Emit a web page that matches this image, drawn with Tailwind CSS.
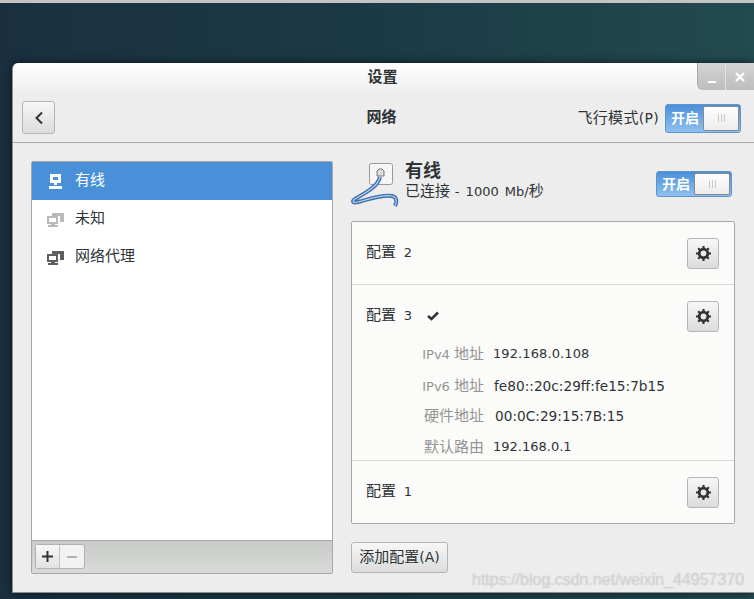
<!DOCTYPE html>
<html lang="zh-CN">
<head>
  <meta charset="UTF-8" />
  <title>设置</title>
  <script src="https://cdn.jsdelivr.net/npm/@tailwindcss/browser@4"></script>
</head>
<body class="overflow-hidden">
  <div class="relative w-[754px] h-[599px] overflow-hidden bg-gradient-to-r from-[#1a3040] via-[#1b3a45] to-[#234a50] font-['DejaVu_Sans','Noto_Sans_CJK_SC',sans-serif] text-[15px] text-[#2e3436]">
    <div class="h-[3px] bg-[#c4c4c4]"></div>

    <!-- window -->
    <div class="relative ml-[12px] mt-[60px] h-[530px] rounded-t-[6px] bg-[#ededed] border-l border-b border-[#8e8e8e] shadow-[0_0_10px_rgba(0,0,0,0.6)]">
      <div class="h-[31px] rounded-t-[6px] bg-gradient-to-b from-white to-[#ededed] flex items-center justify-center pr-[2px]">
        <span class="font-bold text-[15px] leading-none mt-[-3px]">设置</span>
      </div>

      <!-- window buttons -->
      <div class="absolute right-0 top-0 w-[57px] h-[27px] flex rounded-bl-[6px] bg-gradient-to-b from-[#d4d4d4] to-[#bdbdbd] border-l border-[#a8a8a8]">
        <div class="w-[28px] border-r border-[#e2e2e2] flex items-end justify-center pb-[7px]">
          <div class="w-[8px] h-[2px] bg-white"></div>
        </div>
        <div class="flex-1 flex items-center justify-center">
          <svg width="12" height="12" viewBox="0 0 12 12"><path d="M2 2l8 8M10 2l-8 8" stroke="#fff" stroke-width="2.4" /></svg>
        </div>
      </div>

      <!-- header bar -->
      <div class="h-[49px] grid grid-cols-[1fr_auto_1fr] items-center pl-[9px] pr-[13px] border-b border-[#a8a8a8]">
        <button class="w-[33px] h-[33px] mt-[-1px] rounded-[3px] border border-[#b5b5b5] bg-gradient-to-b from-[#f7f7f7] to-[#dcdcdc] flex items-center justify-center">
          <svg width="12" height="14" viewBox="0 0 12 14"><path d="M9 1.500L3.500 7 9 12.500" fill="none" stroke="#2e3436" stroke-width="2" /></svg>
        </button>
        <div class="font-bold text-[15px] mt-[-1px]">网络</div>
        <div class="flex items-center justify-end">
          <span class="mr-[6px] text-[15px] whitespace-nowrap tracking-[0.3px]">飞行模式<span class="text-[14px]">(P)</span></span>
          <div class="w-[76px] h-[29px] shrink-0 rounded-[3px] border border-[#5e93ce] bg-gradient-to-b from-[#4a90d9] to-[#8fc0f0] flex items-center p-[1px]">
            <span class="w-[36px] text-center text-white font-bold text-[14px]">开启</span>
            <div class="flex-1 h-full rounded-[2px] border border-[#8a8a8a] bg-gradient-to-b from-white to-[#ececec] flex items-center justify-center gap-[2px]">
              <i class="w-[1px] h-[8px] bg-[#c8c8c8]"></i><i class="w-[1px] h-[8px] bg-[#c8c8c8]"></i><i class="w-[1px] h-[8px] bg-[#c8c8c8]"></i>
            </div>
          </div>
        </div>
      </div>

      <div class="flex pl-[18px] pt-[18px] gap-[18px]">
        <!-- left list -->
        <div class="w-[302px] h-[413px] flex flex-col rounded-[2px] border border-[#a8a8a8]">
          <div class="flex-1 bg-white">
            <div class="h-[38px] bg-[#4a90d9] text-white flex items-center pl-[17px] gap-[13px]">
              <svg width="13" height="15" viewBox="0 0 13 15"><path fill="#fff" fill-rule="evenodd" d="M1 0h11v9H8v2H5V9H1zM4 3v3h5V3zM0 12h13v3H0z" /></svg>
              <span class="leading-none mt-[-2px]">有线</span>
            </div>
            <div class="h-[38px] flex items-center pl-[15px] gap-[11px]">
              <svg width="17" height="15" viewBox="0 0 17 15"><path fill="#b9b9b9" fill-rule="evenodd" d="M5 1h12v9h-4V4H5zM0 4h11v8H8v1h3v2H1v-2h3v-1H0zM2 6v4h7V6z" /></svg>
              <span class="leading-none mt-[-2px]">未知</span>
            </div>
            <div class="h-[38px] flex items-center pl-[15px] gap-[11px]">
              <svg width="17" height="15" viewBox="0 0 17 15"><path fill="#5d5f5f" fill-rule="evenodd" d="M5 1h12v9h-4V4H5zM0 4h11v8H8v1h3v2H1v-2h3v-1H0zM2 6v4h7V6z" /></svg>
              <span class="leading-none mt-[-2px]">网络代理</span>
            </div>
          </div>
          <div class="h-[33px] border-t border-[#a8a8a8] bg-gradient-to-b from-[#c9cbc8] to-[#d9dbd8] pl-[3px] pt-[3px]">
            <div class="w-[50px] h-[25px] flex rounded-[3px] border border-[#b0b0b0] bg-[#f2f2f2]">
              <div class="w-[24px] border-r border-[#c4c4c4] bg-gradient-to-b from-[#f8f8f8] to-[#e2e2e2] flex items-center justify-center">
                <svg width="11" height="11" viewBox="0 0 11 11"><path d="M5.500 0v11M0 5.500h11" stroke="#2e3436" stroke-width="2" /></svg>
              </div>
              <div class="flex-1 flex items-center justify-center">
                <div class="w-[10px] h-[2px] bg-[#b2b2b2]"></div>
              </div>
            </div>
          </div>
        </div>

        <!-- right panel -->
        <div class="w-[384px]">
          <div class="h-[60px] flex items-start relative">
            <svg class="shrink-0 mt-[1px]" width="48" height="48" viewBox="0 0 48 48">
              <rect x="18.500" y="1.500" width="23" height="21" rx="2" fill="#f6f6f6" stroke="#9a9a9a" />
              <path d="M26 14V9l2-2h3l2 2v5z" fill="#dcdcdc" stroke="#777" />
              <path d="M29 15C27 24 16 30 4 37c-4 3-1 4 3 3 12-3 24-8 34-6 5 1 5 6 3 10" fill="none" stroke="#3f6fae" stroke-width="4" />
              <path d="M29 15C27 24 16 30 4 37c-4 3-1 4 3 3 12-3 24-8 34-6 5 1 5 6 3 10" fill="none" stroke="#b4d0f0" stroke-width="1.200" />
            </svg>
            <div class="ml-[6px]">
              <div class="font-bold text-[18px] leading-[20px]">有线</div>
              <div class="text-[15px] leading-[20px] whitespace-nowrap">已连接 <span class="text-[13px] [word-spacing:2px]">- 1000 Mb/</span>秒</div>
            </div>
            <div class="absolute right-[3px] top-[10px] w-[76px] h-[26px] rounded-[3px] border border-[#5e93ce] bg-gradient-to-b from-[#4a90d9] to-[#8fc0f0] flex items-center p-[1px]">
              <span class="w-[36px] text-center text-white font-bold text-[14px]">开启</span>
              <div class="flex-1 h-full rounded-[2px] border border-[#8a8a8a] bg-gradient-to-b from-white to-[#ececec] flex items-center justify-center gap-[2px]">
                <i class="w-[1px] h-[8px] bg-[#c8c8c8]"></i><i class="w-[1px] h-[8px] bg-[#c8c8c8]"></i><i class="w-[1px] h-[8px] bg-[#c8c8c8]"></i>
              </div>
            </div>
          </div>

          <div class="h-[303px] rounded-[2px] border border-[#a8a8a8] bg-[#fbfbf9] flex flex-col">
            <div class="h-[63px] shrink-0 border-b border-[#d8d8d6] flex items-center pl-[14px] pr-[15px] justify-between">
              <span class="leading-none mt-[-2px]">配置 <span class="text-[13px] ml-[3px]">2</span></span>
              <button class="w-[32px] h-[31px] rounded-[3px] border border-[#b5b5b5] bg-gradient-to-b from-[#f7f7f7] to-[#dcdcdc] flex items-center justify-center">
                <svg width="15" height="15" viewBox="0 0 14 14"><circle cx="7" cy="7" r="4" fill="none" stroke="#2e3436" stroke-width="2.600" /><path d="M7 0v14M0 7h14M2 2l10 10M12 2L2 12" stroke="#2e3436" stroke-width="2" stroke-dasharray="2.500 9" /></svg>
              </button>
            </div>
            <div class="h-[176px] shrink-0 border-b border-[#d8d8d6] pl-[14px] pr-[15px]">
              <div class="h-[62px] flex items-center justify-between">
                <div class="flex items-center gap-[15px]">
                  <span class="leading-none mt-[-2px]">配置 <span class="text-[13px] ml-[3px]">3</span></span>
                  <svg width="12" height="10" viewBox="0 0 12 10"><path d="M1 5l3.500 3L11 1.500" fill="none" stroke="#2e3436" stroke-width="2.500" /></svg>
                </div>
                <button class="w-[32px] h-[31px] rounded-[3px] border border-[#b5b5b5] bg-gradient-to-b from-[#f7f7f7] to-[#dcdcdc] flex items-center justify-center">
                  <svg width="15" height="15" viewBox="0 0 14 14"><circle cx="7" cy="7" r="4" fill="none" stroke="#2e3436" stroke-width="2.600" /><path d="M7 0v14M0 7h14M2 2l10 10M12 2L2 12" stroke="#2e3436" stroke-width="2" stroke-dasharray="2.500 9" /></svg>
                </button>
              </div>
              <div class="grid grid-cols-[118px_1fr] gap-x-[9px] mt-[-8px] leading-[30px] text-[13px] whitespace-nowrap">
                <span class="text-right text-[#949494]">IPv4 <span class="text-[15px]">地址</span></span><span class="tracking-[0.1px]">192.168.0.108</span>
                <span class="text-right text-[#949494] mt-[1px]">IPv6 <span class="text-[15px]">地址</span></span><span class="mt-[1px] ml-[1px] text-[13.7px]">fe80::20c:29ff:fe15:7b15</span>
                <span class="text-right text-[#949494] text-[15px] mt-[-1px]">硬件地址</span><span class="ml-[2px] mt-[-1px] text-[13.700px]">00:0C:29:15:7B:15</span>
                <span class="text-right text-[#949494] text-[15px] mt-[1px]">默认路由</span><span class="mt-[1px]">192.168.0.1</span>
              </div>
            </div>
            <div class="flex-1 flex items-center pl-[14px] pr-[15px] justify-between">
              <span class="leading-none mt-[-2px]">配置 <span class="text-[13px] ml-[3px]">1</span></span>
              <button class="w-[32px] h-[31px] rounded-[3px] border border-[#b5b5b5] bg-gradient-to-b from-[#f7f7f7] to-[#dcdcdc] flex items-center justify-center">
                <svg width="15" height="15" viewBox="0 0 14 14"><circle cx="7" cy="7" r="4" fill="none" stroke="#2e3436" stroke-width="2.600" /><path d="M7 0v14M0 7h14M2 2l10 10M12 2L2 12" stroke="#2e3436" stroke-width="2" stroke-dasharray="2.500 9" /></svg>
              </button>
            </div>
          </div>

          <button class="mt-[18px] w-[97px] h-[31px] rounded-[3px] border border-[#b5b5b5] bg-gradient-to-b from-[#f7f7f7] to-[#dcdcdc] whitespace-nowrap">添加配置<span class="text-[14px]">(A)</span></button>
        </div>
      </div>
    </div>

    <!-- watermark -->
    <div class="absolute left-[472px] top-[569px] text-[16px] leading-[22px] text-white/40 whitespace-nowrap font-['Liberation_Sans',sans-serif] [text-shadow:0_0_1px_rgba(120,120,120,0.5)]">https://blog.csdn.net/weixin_44957370</div>
  </div>
</body>
</html>
